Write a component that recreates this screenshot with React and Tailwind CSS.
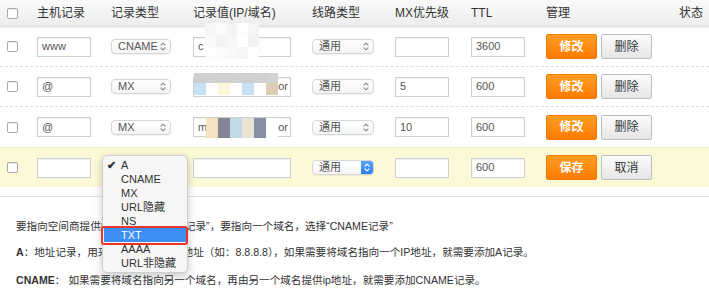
import React from "react";

const font = { fontFamily: '"Liberation Sans", "Noto Sans CJK SC", sans-serif' };

function Checkbox() {
  return <div className="w-[11px] h-[11px] rounded-[2px] border border-[#a9a9a9] bg-white shadow-[inset_0_1px_1px_rgba(0,0,0,0.08)]" />;
}

function Chevron({ color = "#8a8a8a" }) {
  return (
    <svg width="6" height="9" viewBox="0 0 6 9" fill="none" stroke={color} strokeWidth="1.1" strokeLinecap="round" strokeLinejoin="round">
      <path d="M1 3.2 L3 1.2 L5 3.2" />
      <path d="M1 5.8 L3 7.8 L5 5.8" />
    </svg>
  );
}

function Select({ value, w = "w-[60px]", active = false }) {
  return (
    <div className={`${w} h-[15px] rounded-[4px] border border-[#d6d6d6] bg-gradient-to-b from-white to-[#f4f4f4] flex items-center justify-between text-[11px] text-[#555] overflow-hidden shadow-[0_1px_1px_rgba(0,0,0,0.05)]`}>
      <span className="pl-[6px] leading-none">{value}</span>
      {active ? (
        <div className="h-full w-[12px] bg-gradient-to-b from-[#59a4f7] to-[#2b7ff0] flex items-center justify-center">
          <Chevron color="#ffffff" />
        </div>
      ) : (
        <div className="pr-[4px] flex items-center">
          <Chevron />
        </div>
      )}
    </div>
  );
}

function Input({ value = "", w = "w-[54px]", children }) {
  return (
    <div className={`relative ${w} h-[20px] border border-[#cfcfcf] bg-white flex items-center text-[11px] text-[#555] pl-[4px] shadow-[inset_0_1px_1px_rgba(0,0,0,0.06)]`}>
      <span className="leading-none">{value}</span>
      {children}
    </div>
  );
}

function OrangeBtn({ label }) {
  return (
    <div className="w-[51px] h-[25px] rounded-[2px] bg-gradient-to-b from-[#ff9d20] to-[#ff7a00] border border-[#f07a00] flex items-center justify-center text-white text-[12px] font-bold">
      {label}
    </div>
  );
}

function GrayBtn({ label }) {
  return (
    <div className="w-[51px] h-[25px] rounded-[2px] bg-gradient-to-b from-[#fcfcfc] to-[#e6e6e6] border border-[#bdbdbd] flex items-center justify-center text-[#333] text-[12px]">
      {label}
    </div>
  );
}

const cols = ["w-[30px]", "w-[74px]", "w-[82px]", "w-[119px]", "w-[83px]", "w-[76px]", "w-[75px]", "w-[133px]", "flex-1"];

function Row({ cells, className = "" }) {
  return (
    <div className={`flex items-center h-[40px] ${className}`}>
      {cells.map((c, i) => (
        <div key={i} className={`${cols[i]} pl-[7px] flex items-center gap-[4px] shrink-0`}>
          {c}
        </div>
      ))}
    </div>
  );
}

function Blocks({ colors, size = 12, className = "" }) {
  return (
    <div className={`absolute flex ${className}`}>
      {colors.map((c, i) => (
        <div key={i} style={{ background: c, width: size, height: "100%" }} />
      ))}
    </div>
  );
}

const items = ["A", "CNAME", "MX", "URL隐藏", "NS", "TXT", "AAAA", "URL非隐藏"];

export default function App() {
  return (
    <div className="relative w-[709px] h-[299px] bg-white overflow-hidden text-[#333]" style={font}>
      {/* header */}
      <div className="flex items-center h-[27px] bg-gradient-to-b from-[#fafafa] to-[#ededed] border-b border-[#dedede] shadow-[0_1px_2px_rgba(0,0,0,0.06)] text-[12px] text-[#333]">
        {["", "主机记录", "记录类型", "记录值(IP/域名)", "线路类型", "MX优先级", "TTL", "管理", "状态"].map((h, i) => (
          <div key={i} className={`${cols[i]} pl-[7px] shrink-0`}>
            {i === 0 ? <Checkbox /> : h}
          </div>
        ))}
      </div>

      <Row
        className="border-b border-dashed border-[#dcdcdc]"
        cells={[
          <Checkbox />,
          <Input value="www" />,
          <Select value="CNAME" />,
          <Input value="c" w="w-[98px]">
            <span className="absolute right-[30px] text-[11px] text-[#777]">a.</span>
            <div className="absolute left-[11px] top-[-15px] w-[54px] h-[36px] grid grid-cols-5 grid-rows-3">
              {["#f6f6f6", "#fbfbfb", "#f3f3f3", "#fdfdfd", "#f5f5f5", "#fafafa", "#f4f4f4", "#f7f7f7", "#ffffff", "#f2f2f2", "#fdfdfd", "#fbfbfb", "#f8f8f8", "#f6f6f6", "#ffffff"].map((c, i) => (
                <div key={i} style={{ background: c }} />
              ))}
            </div>
          </Input>,
          <Select value="通用" w="w-[62px]" />,
          <Input value="" />,
          <Input value="3600" />,
          <>
            <OrangeBtn label="修改" />
            <GrayBtn label="删除" />
          </>,
          null,
        ]}
      />
      <Row
        className="border-b border-dashed border-[#dcdcdc]"
        cells={[
          <Checkbox />,
          <Input value="@" />,
          <Select value="MX" />,
          <Input value="" w="w-[98px]">
            <span className="absolute right-[2px] text-[11px] text-[#555]">or</span>
            <Blocks className="left-[0px] top-[-5px] h-[10px]" colors={["#cfcfcf", "#cfcfcf", "#d1d1d1", "#cfcfcf", "#d0d0d0", "#cfcfcf", "#d2d2d2"]} />
            <Blocks className="left-[0px] top-[5px] h-[12px]" colors={["#c7e1f4", "#ffffff", "#fbf6dc", "#ffffff", "#c7e0f3", "#ffffff", "#dccdb4"]} />
          </Input>,
          <Select value="通用" w="w-[62px]" />,
          <Input value="5" />,
          <Input value="600" />,
          <>
            <OrangeBtn label="修改" />
            <GrayBtn label="删除" />
          </>,
          null,
        ]}
      />
      <Row
        cells={[
          <Checkbox />,
          <Input value="@" />,
          <Select value="MX" />,
          <Input value="m" w="w-[98px]">
            <span className="absolute right-[2px] text-[11px] text-[#555]">or</span>
            <Blocks className="left-[12px] top-[0px] h-[20px]" colors={["#f3e1c0", "#858594", "#c2d9e6", "#ece2d6", "#8790a2", "#ffffff"]} />
          </Input>,
          <Select value="通用" w="w-[62px]" />,
          <Input value="10" />,
          <Input value="600" />,
          <>
            <OrangeBtn label="修改" />
            <GrayBtn label="删除" />
          </>,
          null,
        ]}
      />
      <Row
        className="bg-[#fcf9d7] border-t border-[#f3efc4]"
        cells={[
          <Checkbox />,
          <Input value="" />,
          <Select value="A" />,
          <Input value="" w="w-[98px]" />,
          <Select value="通用" w="w-[62px]" active />,
          <Input value="" />,
          <Input value="600" />,
          <>
            <OrangeBtn label="保存" />
            <GrayBtn label="取消" />
          </>,
          null,
        ]}
      />

      <div className="mt-[9px] border-t border-[#e3e3e3]" />

      <div className="pl-[16px] pt-[22px] text-[10.6px] text-[#333] flex flex-col gap-[12px] leading-[14px]">
        <p>要指向空间商提供的IP地址，选择“A记录”，要指向一个域名，选择“CNAME记录”</p>
        <p>
          <b>A</b>：地址记录，用来指定域名的IPv4地址（如：8.8.8.8），如果需要将域名指向一个IP地址，就需要添加A记录。
        </p>
        <p className="mt-[2px]">
          <b>CNAME</b>： 如果需要将域名指向另一个域名，再由另一个域名提供ip地址，就需要添加CNAME记录。
        </p>
      </div>

      {/* dropdown menu */}
      <div className="absolute left-[102px] top-[155px] w-[86px] h-[118px] rounded-[5px] bg-[#f6f6f6] border border-[#cfcfcf] shadow-[0_3px_8px_rgba(0,0,0,0.22)] pt-[2px]">
        {items.map((it, i) => (
          <div key={it} className={`relative h-[14px] flex items-center text-[11px] leading-none ${i === 5 ? "bg-[#3d8ef0] text-white mx-[1px]" : "text-[#333]"}`}>
            <span className={`${i === 5 ? "w-[17px]" : "w-[18px]"} pl-[4px] text-[11px] font-bold`}>{i === 0 ? "✔" : ""}</span>
            <span>{it}</span>
          </div>
        ))}
      </div>
      {/* red highlight */}
      <div className="absolute left-[101px] top-[226px] w-[87px] h-[19px] rounded-[3px] border-2 border-[#e8352a]" />
    </div>
  );
}
